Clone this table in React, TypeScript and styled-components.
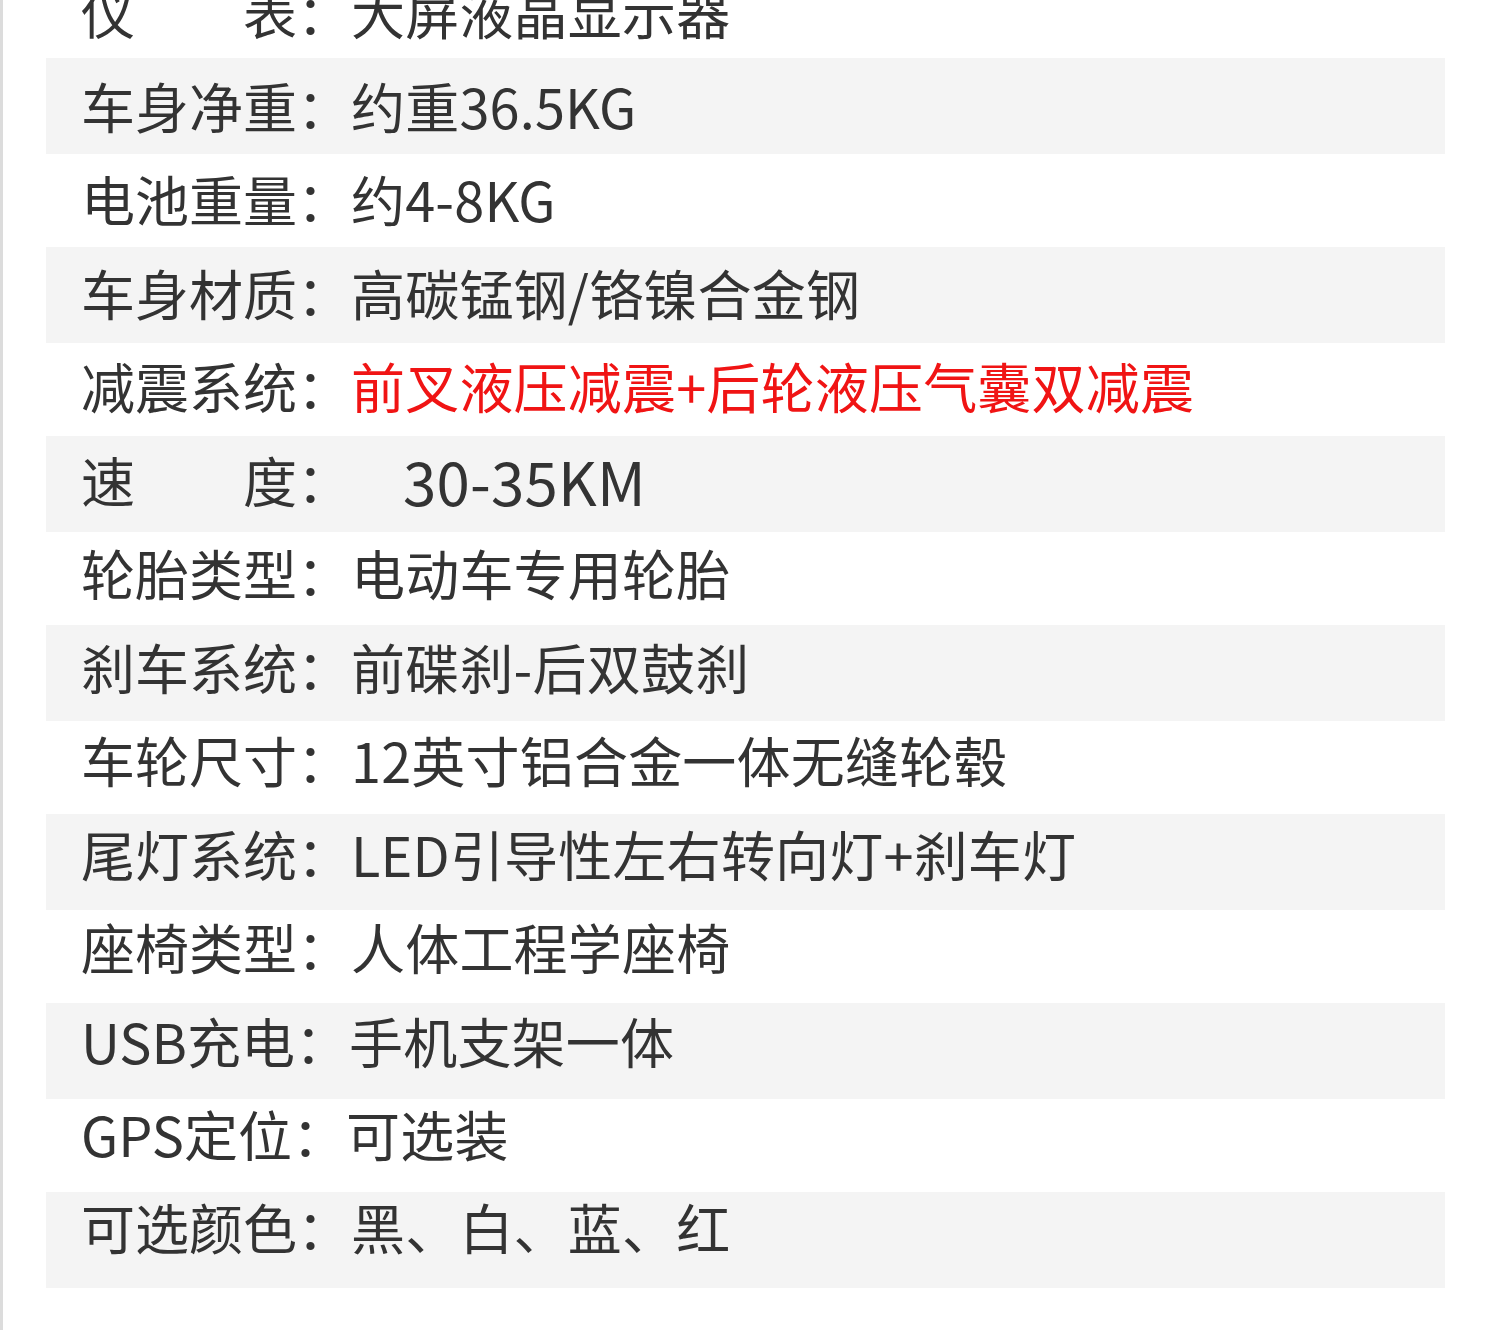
import { createGlobalStyle, styled } from "styled-components";

const GlobalStyle = createGlobalStyle`
	html, body {
		margin: 0;
		padding: 0;
		background: #ffffff;
	}
`;

const Page = styled.div`
	width: 1500px;
	height: 1330px;
	overflow: hidden;
	background: #ffffff;
	border-left: 3px solid #dcdcdc;
	box-sizing: border-box;
	font-family: "Noto Sans CJK SC", "Noto Sans", sans-serif;
	color: #333333;
`;

const SpecList = styled.ul`
	list-style: none;
	margin: -35px 0 0 0;
	padding: 0 55px 0 43px;
	display: flex;
	flex-direction: column;
`;

// text drifts up a little against the bands from row to row, as in the source image
const SpecRow = styled.li<{ $shade: boolean; $lift: number }>`
	box-sizing: border-box;
	height: ${(p) => (p.$shade ? "96px" : "93px")};
	background: ${(p) => (p.$shade ? "#f4f4f4" : "transparent")};
	display: flex;
	align-items: center;
	padding-left: 35px;
	padding-bottom: ${(p) => p.$lift * 2}px;
	font-size: 54px;
	line-height: 1;
	white-space: pre;
`;

const Label = styled.span`
	color: #333333;
`;

const Value = styled.span<{ $red?: boolean; $big?: boolean }>`
	color: ${(p) => (p.$red ? "#f01414" : "#333333")};
	font-size: ${(p) => (p.$big ? "60px" : "54px")};
	margin-left: ${(p) => (p.$big ? "52px" : "0")};
	letter-spacing: 0.2px;
`;

type Spec = { label: string; value: string; red?: boolean; big?: boolean };

const specs: Spec[] = [
	{ label: "仪　　表：", value: "大屏液晶显示器" },
	{ label: "车身净重：", value: "约重36.5KG" },
	{ label: "电池重量：", value: "约4-8KG" },
	{ label: "车身材质：", value: "高碳锰钢/铬镍合金钢" },
	{ label: "减震系统：", value: "前叉液压减震+后轮液压气囊双减震", red: true },
	{ label: "速　　度：", value: "30-35KM", big: true },
	{ label: "轮胎类型：", value: "电动车专用轮胎" },
	{ label: "刹车系统：", value: "前碟刹-后双鼓刹" },
	{ label: "车轮尺寸：", value: "12英寸铝合金一体无缝轮毂" },
	{ label: "尾灯系统：", value: "LED引导性左右转向灯+刹车灯" },
	{ label: "座椅类型：", value: "人体工程学座椅" },
	{ label: "USB充电：", value: "手机支架一体" },
	{ label: "GPS定位：", value: "可选装" },
	{ label: "可选颜色：", value: "黑、白、蓝、红" },
];

export default function App() {
	return (
		<>
			<GlobalStyle />
			<Page>
				<SpecList>
					{specs.map((s, i) => (
						<SpecRow key={s.label} $shade={i % 2 === 1} $lift={Math.max(0, (i - 1) * 1.05)}>
							<Label>{s.label}</Label>
							<Value $red={s.red} $big={s.big}>
								{s.value}
							</Value>
						</SpecRow>
					))}
				</SpecList>
			</Page>
		</>
	);
}
